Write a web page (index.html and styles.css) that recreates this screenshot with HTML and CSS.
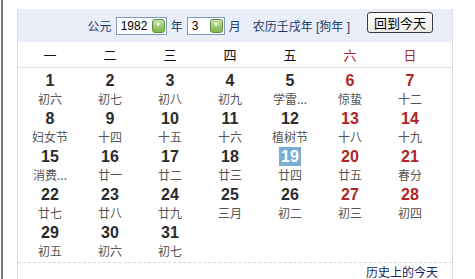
FILE: index.html
```html
<!DOCTYPE html>
<html lang="zh-CN">

<head>
  <meta charset="UTF-8" />
  <title>万年历</title>
  <link rel="stylesheet" href="styles.css">
</head>

<body>
  <div class="page">
    <div class="cal">
      <div class="cal-head">
        <span class="label">公元</span>
        <span class="select year"><span class="val">1982</span><i class="drop"></i></span>
        <span class="label">年</span>
        <span class="select month"><span class="val">3</span><i class="drop"></i></span>
        <span class="label">月</span>
        <span class="lunar-year">农历壬戌年 [狗年 ]</span>
        <button class="today-btn">回到今天</button>
      </div>
      <ul class="week">
        <li>一</li>
        <li>二</li>
        <li>三</li>
        <li>四</li>
        <li>五</li>
        <li class="weekend">六</li>
        <li class="weekend">日</li>
      </ul>
      <ul class="days"></ul>
      <div class="cal-foot">
        <a class="history">历史上的今天</a>
      </div>
    </div>
  </div>
  <script>
    // 1982年3月 农历
    const lunar = ['初六', '初七', '初八', '初九', '学雷...', '惊蛰', '十二',
      '妇女节', '十四', '十五', '十六', '植树节', '十八', '十九',
      '消费...', '廿一', '廿二', '廿三', '廿四', '廿五', '春分',
      '廿七', '廿八', '廿九', '三月', '初二', '初三', '初四',
      '初五', '初六', '初七']
    const today = 19
    const ul = document.querySelector('.days')
    lunar.forEach((text, i) => {
      const day = i + 1
      const li = document.createElement('li')
      if (i % 7 >= 5) li.classList.add('weekend')
      if (day === today) li.classList.add('today')
      li.innerHTML = `<b>${day}</b><span>${text}</span>`
      ul.appendChild(li)
    })
  </script>
</body>

</html>
```

FILE: styles.css
```css
* {
  box-sizing: border-box;
}

body {
  margin: 0;
  background: #fff;
  font-family: "Liberation Sans", Arial, "Noto Sans CJK SC", sans-serif;
}

.page {
  height: 279px;
  overflow: hidden;
  margin-left: 1px;
  border-left: 2px solid #6e7e76;
  padding: 9px 0 0 14px;
}

.cal {
  width: 436px;
  height: 270px;
  border-left: 1px solid #d9dee6;
  border-right: 1px solid #d9dee6;
}

.cal-head {
  height: 33px;
  background: #e9eef8;
  display: flex;
  align-items: center;
  justify-content: flex-end;
  padding-right: 19px;
  color: #1d3a68;
  font-size: 12px;
}

.label {
  margin: 0 4px;
}

.select {
  display: flex;
  align-items: center;
  justify-content: space-between;
  height: 18px;
  background: #fff;
  border: 1px solid #7f9db9;
  padding: 0 1px 0 4px;
  color: #000;
  font-size: 12px;
}

.select.year {
  width: 51px;
}

.select.month {
  width: 38px;
}

.drop {
  width: 13px;
  height: 14px;
  border-radius: 3px;
  border: 1px solid #5f8f3e;
  background: linear-gradient(#c6e3a1, #7fb454);
  position: relative;
}

.drop::after {
  content: "";
  position: absolute;
  left: 3px;
  top: 3px;
  width: 5px;
  height: 5px;
  border-radius: 1px;
  background: #f4faee;
  clip-path: polygon(0 10%, 100% 10%, 50% 80%);
}

.lunar-year {
  margin-left: 8px;
  margin-right: 17px;
}

.today-btn {
  width: 66px;
  height: 21px;
  margin-top: -6px;
  padding: 0;
  border: 1px solid #3a3a3a;
  border-radius: 3px;
  background: linear-gradient(#ffffff, #ecebe6);
  color: #000;
  font-family: "Noto Sans CJK SC", sans-serif;
  font-size: 13px;
  line-height: 19px;
}

.week,
.days {
  margin: 0;
  padding: 0 0 0 2px;
  list-style: none;
  display: grid;
  grid-template-columns: repeat(7, 60px);
}

.week {
  height: 26px;
  align-items: center;
  border-bottom: 1px solid #dde1e6;
  font-family: "Noto Sans CJK SC", sans-serif;
  font-size: 13px;
  color: #111;
}

.week li {
  text-align: center;
}

.week li.weekend {
  color: #a5272a;
}

.days {
  grid-auto-rows: 38px;
  padding-top: 3px;
  border-bottom: 1px dashed #d3d7dc;
  height: 195px;
}

.days li {
  display: flex;
  flex-direction: column;
  align-items: center;
}

.days b {
  height: 19px;
  padding: 0 2px;
  font-size: 16px;
  line-height: 19px;
  color: #2b2b2b;
}

.days span {
  font-family: "Noto Sans CJK SC", sans-serif;
  font-size: 12px;
  line-height: 17px;
  color: #555;
}

.days li.weekend b {
  color: #b02426;
}

.days li.today b {
  background: #78aed5;
  color: #fff;
}

.cal-foot {
  display: flex;
  justify-content: flex-end;
  padding: 1px 14px 0 0;
}

.history {
  font-family: "Noto Sans CJK SC", sans-serif;
  font-size: 12px;
  line-height: 15px;
  color: #14265c;
}
```
